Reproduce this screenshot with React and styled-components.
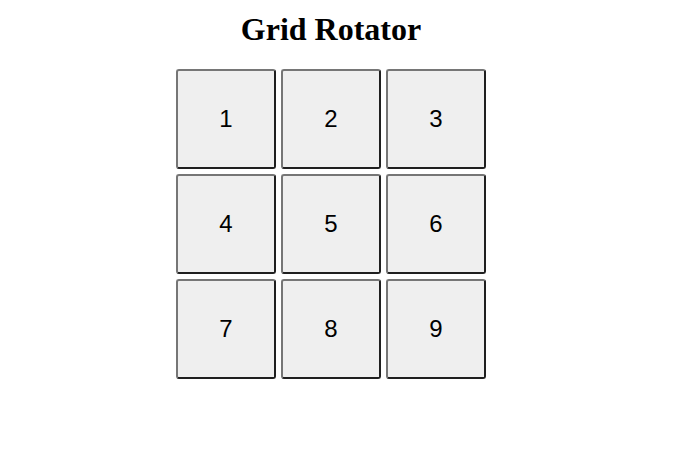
import React from 'react';
import styled, { createGlobalStyle } from 'styled-components';

const GlobalStyle = createGlobalStyle`
  html, body {
    margin: 0;
    padding: 0;
    background: #ffffff;
  }
`;

const Page = styled.div`
  width: 662px;
  padding-top: 11px;
  display: flex;
  flex-direction: column;
  align-items: center;
`;

const Title = styled.h1`
  margin: 0 0 21px;
  font-family: "Liberation Serif", "Times New Roman", serif;
  font-size: 32px;
  font-weight: bold;
  line-height: 37px;
  color: #000;
`;

const Grid = styled.div`
  display: grid;
  grid-template-columns: repeat(3, 100px);
  grid-auto-rows: 100px;
  gap: 5px;
`;

const Cell = styled.button`
  appearance: none;
  box-sizing: border-box;
  width: 100px;
  height: 100px;
  padding: 0;
  display: flex;
  align-items: center;
  justify-content: center;
  background: #efefef;
  border: 2px solid;
  border-color: #767676 #1f1f1f #1f1f1f #767676;
  border-radius: 3px;
  font-family: "Liberation Sans", Arial, sans-serif;
  font-size: 24px;
  color: #000;
  cursor: pointer;
`;

const cells = [1, 2, 3, 4, 5, 6, 7, 8, 9];

const App = () => {
  return (
    <Page>
      <GlobalStyle />
      <Title>Grid Rotator</Title>
      <Grid>
        {cells.map((n) => (
          <Cell key={n}>{n}</Cell>
        ))}
      </Grid>
    </Page>
  );
};

export default App;
